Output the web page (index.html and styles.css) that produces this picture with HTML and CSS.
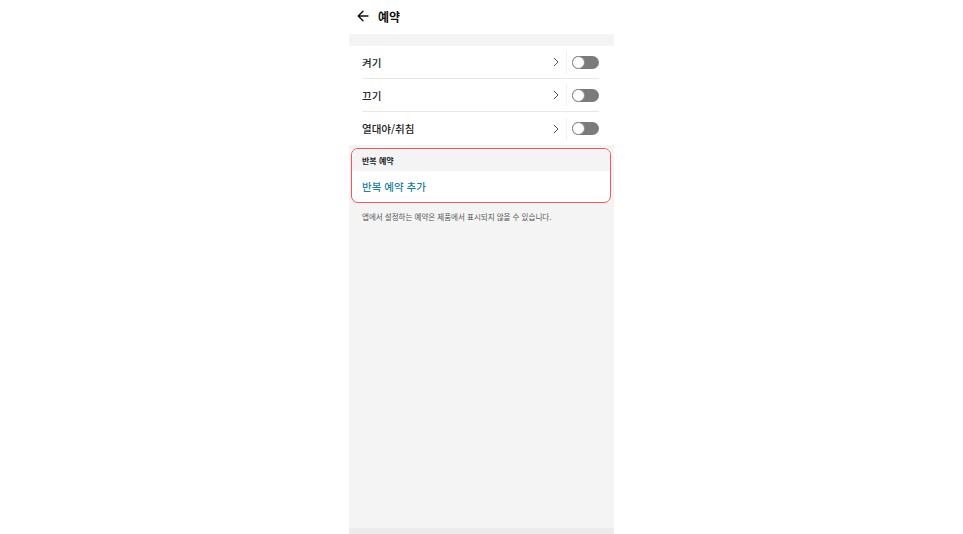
FILE: index.html
```html
<!DOCTYPE html>
<html lang="ko">
<head>
<meta charset="utf-8">
<link rel="stylesheet" href="styles.css">
</head>
<body>
<div class="page">
  <div class="panel">
    <header class="topbar">
      <svg class="back" width="12" height="12" viewBox="0 0 12 12"><path d="M11 6H1.5M6 1.2L1.2 6L6 10.8" fill="none" stroke="#111" stroke-width="1.4" stroke-linecap="round" stroke-linejoin="round"/></svg>
      <span class="title">예약</span>
    </header>
    <div class="gap"></div>
    <ul class="list">
      <li class="row"><span class="label">켜기</span><svg class="chev" width="6" height="10" viewBox="0 0 6 10"><path d="M1 1L5 5L1 9" fill="none" stroke="#555" stroke-width="1"/></svg><span class="sep"></span><span class="toggle"><span class="knob"></span></span></li>
      <li class="row"><span class="label">끄기</span><svg class="chev" width="6" height="10" viewBox="0 0 6 10"><path d="M1 1L5 5L1 9" fill="none" stroke="#555" stroke-width="1"/></svg><span class="sep"></span><span class="toggle"><span class="knob"></span></span></li>
      <li class="row"><span class="label">열대야/취침</span><svg class="chev" width="6" height="10" viewBox="0 0 6 10"><path d="M1 1L5 5L1 9" fill="none" stroke="#555" stroke-width="1"/></svg><span class="sep"></span><span class="toggle"><span class="knob"></span></span></li>
    </ul>
    <section class="repeat">
      <div class="repeat-head">반복 예약</div>
      <div class="repeat-add">반복 예약 추가</div>
    </section>
    <p class="note">앱에서 설정하는 예약은 제품에서 표시되지 않을 수 있습니다.</p>
    <div class="fill"></div>
    <div class="bottom"></div>
  </div>
</div>
</body>
</html>
```
FILE: styles.css
```css
html, body {
  margin: 0;
  padding: 0;
  background: #ffffff;
  font-family: "Noto Sans CJK KR", "Noto Sans", sans-serif;
}
.page {
  display: flex;
  justify-content: center;
  height: 534px;
}
.panel {
  width: 265px;
  height: 534px;
  background: #f4f4f4;
  display: flex;
  flex-direction: column;
}
.topbar {
  height: 34px;
  background: #fff;
  display: flex;
  align-items: center;
  padding-left: 8px;
  box-sizing: border-box;
  padding-bottom: 2px;
}
.back { margin-right: 9px; }
.title {
  font-size: 12px;
  font-weight: 700;
  color: #111;
}
.gap { height: 12px; }
.list {
  list-style: none;
  margin: 0;
  padding: 0 15px 0 13px;
  background: #fff;
}
.row {
  height: 33px;
  display: flex;
  align-items: center;
  border-bottom: 1px solid #e8e8e8;
  box-sizing: border-box;
}
.row:last-child { border-bottom: none; }
.label {
  flex: 1;
  font-size: 10.5px;
  color: #222;
  font-weight: 500;
}
.chev {
  margin-right: 7px;
}
.sep {
  width: 1px;
  height: 22px;
  background: #eeeeee;
  margin-right: 5px;
}
.toggle {
  position: relative;
  width: 27px;
  height: 13px;
  border-radius: 7px;
  background: #7b7b7b;
}
.knob {
  position: absolute;
  left: 0;
  top: 0;
  width: 13px;
  height: 13px;
  box-sizing: border-box;
  border-radius: 50%;
  background: #fff;
  border: 1px solid #8a8a8a;
}
.repeat {
  margin: 3px 3px 0 2px;
  border: 1.5px solid #f05560;
  border-radius: 7px;
  overflow: hidden;
  background: #fff;
}
.repeat-head {
  height: 22px;
  background: #f4f4f4;
  display: flex;
  align-items: center;
  padding-left: 10px;
  font-size: 8px;
  font-weight: 700;
  color: #222;
}
.repeat-add {
  height: 31px;
  display: flex;
  align-items: center;
  padding-left: 10px;
  font-size: 10.5px;
  color: #1f7f9a;
  font-weight: 500;
}
.note {
  margin: 8px 0 0 13px;
  font-size: 7.5px;
  color: #555;
}
.fill { flex: 1; }
.bottom {
  height: 6px;
  background: #ebebeb;
}
```
